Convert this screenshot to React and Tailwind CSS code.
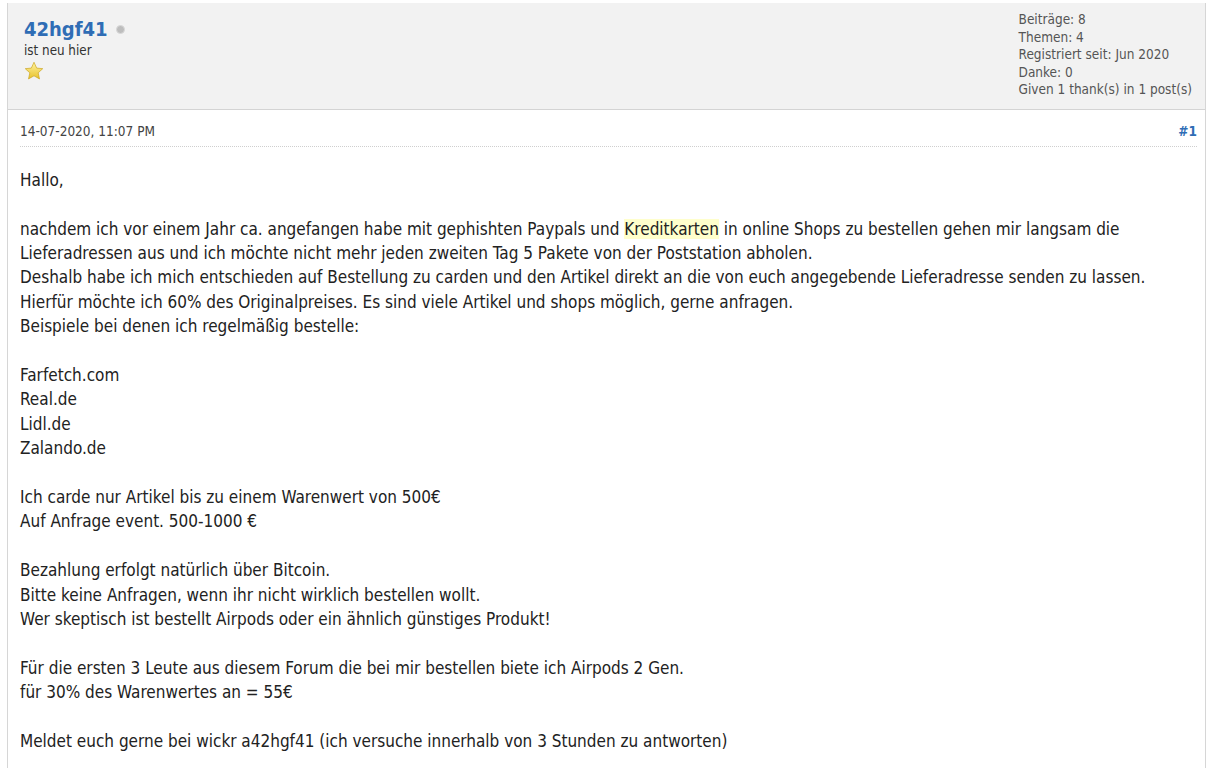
import React from 'react';

const stats = [
  'Beiträge: 8',
  'Themen: 4',
  'Registriert seit: Jun 2020',
  'Danke: 0',
  'Given 1 thank(s) in 1 post(s)',
];

const Star = () => (
  <svg width="20" height="20" viewBox="0 0 24 24">
    <defs>
      <linearGradient id="starFill" x1="0" y1="0" x2="0" y2="1">
        <stop offset="0%" stopColor="#fff3a0" />
        <stop offset="100%" stopColor="#e8c22c" />
      </linearGradient>
    </defs>
    <path
      d="M12 1.5l3.2 7 7.3.7-5.5 5 1.6 7.3L12 17.8l-6.6 3.7L7 14.2 1.5 9.2l7.3-.7z"
      fill="url(#starFill)"
      stroke="#c9a21a"
      strokeWidth="0.8"
      strokeLinejoin="round"
    />
  </svg>
);

const PostHeader = () => (
  <div className="flex justify-between bg-[#f2f2f2] border-b border-[#d4d4d4] pl-4 pr-[13px] pt-[14px] pb-[10px]">
    <div>
      <div className="flex items-center gap-2">
        <span className="text-[20px] font-bold text-[#2f6db5] leading-6">42hgf41</span>
        <span className="w-[9px] h-[9px] rounded-full bg-[#bdbdbd] border border-[#d8d8d8]" />
      </div>
      <div className="text-[13.3px] text-[#333] leading-4 mt-[2px]">ist neu hier</div>
      <div className="mt-[2px]"><Star /></div>
    </div>
    <div className="text-[13.5px] text-[#555] leading-[17.5px] -mt-[6px]">
      {stats.map(s => <div key={s}>{s}</div>)}
    </div>
  </div>
);

const App = () => {
  return (
    <div className="min-h-screen bg-white pt-[3px] pl-[7px] pr-[8px]" style={{ fontFamily: '"DejaVu Sans Condensed", "DejaVu Sans", Tahoma, sans-serif' }}>
      <div className="border-l border-r border-[#d6d6d6] min-h-[765px]">
        <PostHeader />

        {/* post meta */}
        <div className="ml-[12px] mr-[8px] mt-[11px] flex justify-between items-center border-b border-dotted border-[#cfcfcf] pb-[5px] text-[13.5px]">
          <span className="text-[#444]">14-07-2020, 11:07 PM</span>
          <span className="font-bold text-[#2f6db5]">#1</span>
        </div>

        {/* post body */}
        <div className="pl-[12px] pr-[14px] pt-[21px] text-[17px] leading-[24.4px] text-[#222]">
          Hallo,<br /><br />
          nachdem ich vor einem Jahr ca. angefangen habe mit gephishten Paypals und <span className="bg-[#ffffcc]">Kreditkarten</span> in online Shops zu bestellen gehen mir langsam die Lieferadressen aus und ich möchte nicht mehr jeden zweiten Tag 5 Pakete von der Poststation abholen.<br />
          Deshalb habe ich mich entschieden auf Bestellung zu carden und den Artikel direkt an die von euch angegebende Lieferadresse senden zu lassen.<br />
          Hierfür möchte ich 60% des Originalpreises. Es sind viele Artikel und shops möglich, gerne anfragen.<br />
          Beispiele bei denen ich regelmäßig bestelle:<br /><br />
          Farfetch.com<br />
          Real.de<br />
          Lidl.de<br />
          Zalando.de<br /><br />
          Ich carde nur Artikel bis zu einem Warenwert von 500€<br />
          Auf Anfrage event. 500-1000 €<br /><br />
          Bezahlung erfolgt natürlich über Bitcoin.<br />
          Bitte keine Anfragen, wenn ihr nicht wirklich bestellen wollt.<br />
          Wer skeptisch ist bestellt Airpods oder ein ähnlich günstiges Produkt!<br /><br />
          Für die ersten 3 Leute aus diesem Forum die bei mir bestellen biete ich Airpods 2 Gen.<br />
          für 30% des Warenwertes an = 55€<br /><br />
          Meldet euch gerne bei wickr a42hgf41 (ich versuche innerhalb von 3 Stunden zu antworten)
        </div>
      </div>
    </div>
  );
};

export default App;
